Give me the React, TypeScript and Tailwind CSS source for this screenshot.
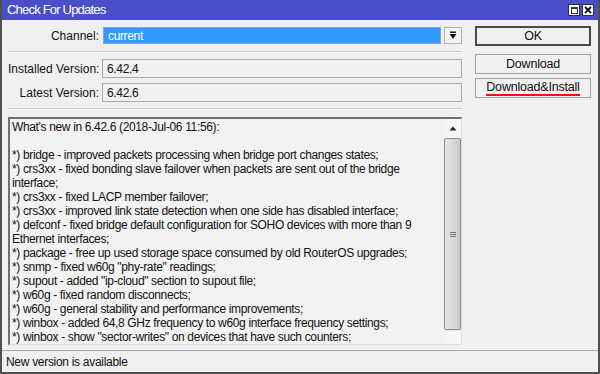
import React from "react";

const notes = [
  "What's new in 6.42.6 (2018-Jul-06 11:56):",
  "",
  "*) bridge - improved packets processing when bridge port changes states;",
  "*) crs3xx - fixed bonding slave failover when packets are sent out of the bridge",
  "interface;",
  "*) crs3xx - fixed LACP member failover;",
  "*) crs3xx - improved link state detection when one side has disabled interface;",
  "*) defconf - fixed bridge default configuration for SOHO devices with more than 9",
  "Ethernet interfaces;",
  "*) package - free up used storage space consumed by old RouterOS upgrades;",
  "*) snmp - fixed w60g \"phy-rate\" readings;",
  "*) supout - added \"ip-cloud\" section to supout file;",
  "*) w60g - fixed random disconnects;",
  "*) w60g - general stability and performance improvements;",
  "*) winbox - added 64,8 GHz frequency to w60g interface frequency settings;",
  "*) winbox - show \"sector-writes\" on devices that have such counters;",
];

function Separator() {
  return <div className="h-[2px] border-t border-[#c8c8c8] border-b border-b-white" />;
}

function Field({ label, value }: { label: string; value: string }) {
  return (
    <div className="flex h-[19px] items-center">
      <div className="w-[91px] shrink-0 whitespace-nowrap text-right tracking-normal">{label}</div>
      <div className="ml-[3px] flex h-full flex-1 items-center border border-[#a9a9a9] bg-[#f0f0f0] pl-[4px]">
        {value}
      </div>
    </div>
  );
}

function WinButton({ children, main }: { children: React.ReactNode; main?: boolean }) {
  return (
    <div
      className={
        "flex items-center justify-center bg-[#f0f0f0] " +
        (main ? "h-[20px] border-2 border-[#4a4a4a]" : "h-[20px] border border-[#a0a0a0]")
      }
    >
      {children}
    </div>
  );
}

export default function App() {
  return (
    <div
      className="flex h-[374px] w-[600px] flex-col overflow-hidden border-x-[2px] border-b-[2px] border-[#505050] bg-[#f0f0f0] text-[12px] tracking-[-0.35px] text-[#111]"
      style={{ fontFamily: '"Liberation Sans", Arial, sans-serif' }}
    >
      {/* title bar */}
      <div className="flex h-[20px] shrink-0 items-center bg-[#4a4ec8] pl-[5px] pr-[4px]">
        <div className="text-[13px] tracking-[-0.8px] text-white">Check For Updates</div>
        <div className="ml-auto flex gap-[2px]">
          <div className="flex h-[12px] w-[12px] items-center justify-center border border-[#333] bg-white">
            <div className="h-[7px] w-[7px] border border-[#333] border-t-2" />
          </div>
          <div className="flex h-[12px] w-[12px] items-center justify-center border border-[#333] bg-white">
            <svg width="8" height="8" viewBox="0 0 8 8">
              <path d="M1 1 L7 7 M7 1 L1 7" stroke="#111" strokeWidth="1.8" />
            </svg>
          </div>
        </div>
      </div>

      <div className="flex min-h-0 flex-1">
        {/* left column */}
        <div className="flex w-[460px] shrink-0 flex-col pl-[6px] pt-[7px]">
          <div className="flex h-[17px] items-center">
            <div className="w-[91px] shrink-0 text-right tracking-normal">Channel:</div>
            <div className="ml-[4px] flex h-full flex-1 items-center border border-[#7aa7d8] bg-[#3399ff] pl-[4px] text-white">
              current
            </div>
            <div className="ml-[3px] flex h-[17px] w-[18px] items-center justify-center border border-[#b0b0b0] bg-[#f4f4f4]">
              <svg width="8" height="9" viewBox="0 0 8 9">
                <rect x="1" y="0.5" width="6" height="1.4" fill="#111" />
                <path d="M0.5 3 L7.5 3 L4 8 Z" fill="#111" />
              </svg>
            </div>
          </div>
          <div className="mt-[7px]">
            <Separator />
          </div>
          <div className="mt-[6px] flex flex-col gap-[5px]">
            <Field label="Installed Version:" value="6.42.4" />
            <Field label="Latest Version:" value="6.42.6" />
          </div>
          <div className="mt-[6px]">
            <Separator />
          </div>
          {/* notes box */}
          <div className="mt-[7px] flex h-[228px] border-l-2 border-t-2 border-[#707070] border-r border-b border-r-[#dcdcdc] border-b-[#dcdcdc] bg-[#f2f2f2]">
            <div className="flex-1 overflow-hidden pl-[2px] pt-[1px] leading-[14px] whitespace-pre">
              {notes.map((l, i) => (
                <div key={i} className="h-[14px]">
                  {l}
                </div>
              ))}
            </div>
            <div className="flex w-[17px] flex-col bg-[#f6f6f6]">
              <div className="flex h-[19px] items-center justify-center">
                <svg width="8" height="5" viewBox="0 0 8 5">
                  <path d="M0.5 4.5 L4 0.5 L7.5 4.5 Z" fill="#222" />
                </svg>
              </div>
              <div className="flex flex-1 items-center justify-center rounded-[2px] border border-[#8c8c8c] bg-gradient-to-r from-[#e6e6e6] via-[#dadada] to-[#c9c9c9]">
                <div className="flex flex-col gap-[1px]">
                  <div className="h-px w-[6px] bg-[#777]" />
                  <div className="h-px w-[6px] bg-[#777]" />
                  <div className="h-px w-[6px] bg-[#777]" />
                </div>
              </div>
              <div className="h-[14px] border-t border-[#e4e4e4]" />
            </div>
          </div>
        </div>

        {/* right buttons */}
        <div className="flex flex-1 flex-col pl-[13px] pr-[7px] pt-[6px] text-[12.5px] tracking-[-0.2px]">
          <WinButton main>OK</WinButton>
          <div className="mt-[8px] flex flex-col gap-[4px]">
            <WinButton>Download</WinButton>
            <WinButton>
              <span className="border-b-2 border-[#ee1111] leading-[14px]">Download&amp;Install</span>
            </WinButton>
          </div>
        </div>
      </div>

      {/* status bar */}
      <div className="flex h-[22px] shrink-0 items-center border-t border-[#a8a8a8] pl-[4px] tracking-[-0.3px]">
        New version is available
      </div>
    </div>
  );
}
